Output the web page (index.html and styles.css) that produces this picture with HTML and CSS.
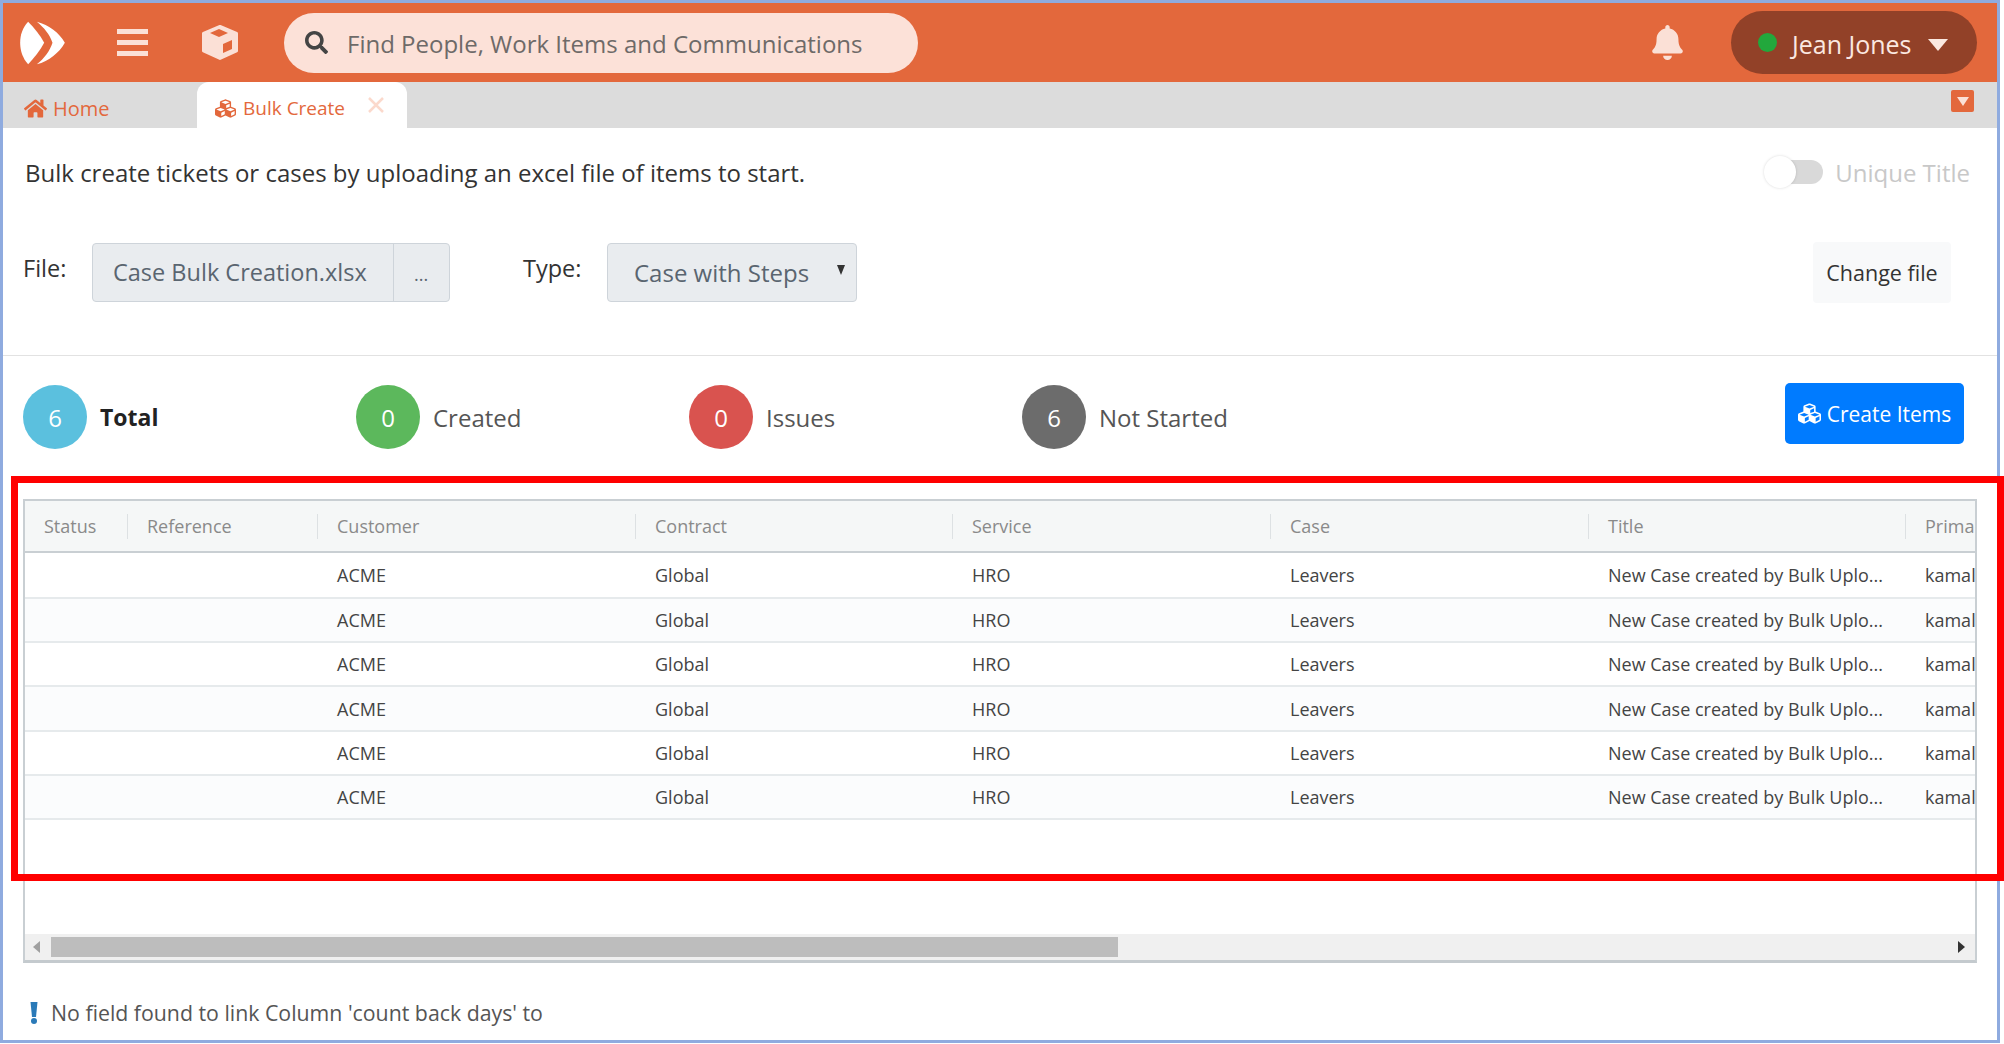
FILE: index.html

```html
<!DOCTYPE html>
<html lang="en">
 <head>
  <meta charset="UTF-8">
  <title>Bulk Create</title>
  <link rel="stylesheet" href="styles.css">
 </head>
 <body>
 <div class="frame">
	<header class="topbar">
		<svg class="logo" viewBox="55 60 140 132">
			<path d="M82 62 C65 80 58 102 58 125 C58 150 66 172 82 190 C100 170 118 148 130 125 C118 102 100 80 82 62Z" fill="#fff"/>
			<path d="M108 62 C145 72 175 95 192 125 C175 155 145 180 108 190 C130 172 147 150 155 125 C147 100 130 80 108 62Z" fill="#fff"/>
		</svg>
		<div class="burger"><span></span><span></span><span></span></div>
		<svg class="box-icon" viewBox="0 0 36 36">
			<path d="M18 1.5 L34.5 8.5 V26 L18 33.5 L1.5 26 V8.5Z" fill="#fbe0d6" stroke="#fbe0d6" stroke-width="3" stroke-linejoin="round"/>
			<path d="M17 4 L26 8 L17 12 L8 8Z" fill="#e3683c"/>
			<path d="M21 19 L30 15 V24 L21 28Z" fill="#e3683c"/>
		</svg>
		<div class="search">
			<svg class="search-icon" viewBox="0 0 512 512"><path d="M505 442.7L405.3 343c-4.5-4.5-10.6-7-17-7H372c27.6-35.3 44-79.7 44-128C416 93.1 322.9 0 208 0S0 93.1 0 208s93.1 208 208 208c48.3 0 92.7-16.4 128-44v16.3c0 6.4 2.5 12.5 7 17l99.7 99.7c9.4 9.4 24.6 9.4 33.9 0l28.3-28.3c9.4-9.4 9.4-24.6.1-34zM208 336c-70.7 0-128-57.2-128-128 0-70.7 57.2-128 128-128 70.7 0 128 57.2 128 128 0 70.7-57.2 128-128 128z"/></svg>
			<span>Find People, Work Items and Communications</span>
		</div>
		<svg class="bell" viewBox="0 0 448 512"><path d="M224 512c35.32 0 63.97-28.65 63.97-64H160.03c0 35.35 28.65 64 63.97 64zm215.39-149.71c-19.32-20.76-55.47-51.99-55.47-154.29 0-77.7-54.48-139.9-127.94-155.16V32c0-17.67-14.32-32-31.98-32s-31.98 14.33-31.98 32v20.84C118.56 68.1 64.08 130.3 64.08 208c0 102.3-36.15 133.53-55.47 154.29-6 6.45-8.66 14.16-8.61 21.71.11 16.4 12.98 32 32.1 32h383.8c19.12 0 32-15.6 32.1-32 .05-7.55-2.61-15.27-8.61-21.71z"/></svg>
		<div class="user">
			<i class="dot"></i>
			<span>Jean Jones</span>
			<i class="caret"></i>
		</div>
	</header>

	<nav class="tabs">
		<div class="tab home">
			<svg class="tab-icon" viewBox="0 0 576 512"><path d="M280.37 148.26L96 300.11V464a16 16 0 0 0 16 16l112.06-.29a16 16 0 0 0 15.92-16V368a16 16 0 0 1 16-16h64a16 16 0 0 1 16 16v95.64a16 16 0 0 0 16 16.05L464 480a16 16 0 0 0 16-16V300L295.67 148.26a12.19 12.19 0 0 0-15.3 0zM571.6 251.47L488 182.56V44.05a12 12 0 0 0-12-12h-56a12 12 0 0 0-12 12v72.61L318.47 43a48 48 0 0 0-61 0L4.34 251.47a12 12 0 0 0-1.6 16.9l25.5 31A12 12 0 0 0 45.15 301l235.22-193.74a12.19 12.19 0 0 1 15.3 0L530.9 301a12 12 0 0 0 16.9-1.6l25.5-31a12 12 0 0 0-1.7-16.93z"/></svg>
			<span>Home</span>
		</div>
		<div class="tab active">
			<svg class="tab-icon" viewBox="0 0 512 512"><path d="M488.6 250.2L392 214V105.5c0-15-9.3-28.4-23.4-33.7l-100-37.5c-8.1-3.1-17.1-3.1-25.3 0l-100 37.5c-14.1 5.3-23.4 18.7-23.4 33.7V214l-96.6 36.2C9.3 255.5 0 268.9 0 283.9V394c0 13.6 7.7 26.1 19.9 32.2l100 50c10.1 5.1 22.1 5.1 32.2 0l103.9-52 103.9 52c10.1 5.1 22.1 5.1 32.2 0l100-50c12.2-6.1 19.9-18.6 19.9-32.2V283.9c0-15-9.3-28.4-23.4-33.7zM358 214.8l-85 31.9v-68.2l85-37v73.3zM154 104.1l102-38.2 102 38.2v.6l-102 41.4-102-41.4v-.6zm84 291.1l-85 42.5v-79.1l85-38.8v75.4zm0-112l-102 41.4-102-41.4v-.6l102-38.2 102 38.2v.6zm240 112l-85 42.5v-79.1l85-38.8v75.4zm0-112l-102 41.4-102-41.4v-.6l102-38.2 102 38.2v.6z"/></svg>
			<span>Bulk Create</span>
			<svg class="tab-close" viewBox="0 0 16 16"><path d="M1 1L15 15M15 1L1 15"/></svg>
		</div>
		<div class="tab-menu"><i></i></div>
	</nav>

	<div class="intro">
		<span>Bulk create tickets or cases by uploading an excel file of items to start.</span>
		<div class="unique">
			<div class="toggle"><i></i></div>
			<span>Unique Title</span>
		</div>
	</div>

	<div class="file-row">
		<label class="field-label">File:</label>
		<div class="file-input">
			<span class="file-name">Case Bulk Creation.xlsx</span>
			<span class="file-more">...</span>
		</div>
		<label class="field-label type-label">Type:</label>
		<div class="select">
			<span>Case with Steps</span>
			<i></i>
		</div>
		<button class="change-btn">Change file</button>
	</div>

	<div class="stats">
		<div class="stat"><span class="circle blue">6</span><strong>Total</strong></div>
		<div class="stat"><span class="circle green">0</span><span>Created</span></div>
		<div class="stat"><span class="circle red">0</span><span>Issues</span></div>
		<div class="stat"><span class="circle grey">6</span><span>Not Started</span></div>
		<button class="create-btn">
			<svg viewBox="0 0 512 512"><path d="M488.6 250.2L392 214V105.5c0-15-9.3-28.4-23.4-33.7l-100-37.5c-8.1-3.1-17.1-3.1-25.3 0l-100 37.5c-14.1 5.3-23.4 18.7-23.4 33.7V214l-96.6 36.2C9.3 255.5 0 268.9 0 283.9V394c0 13.6 7.7 26.1 19.9 32.2l100 50c10.1 5.1 22.1 5.1 32.2 0l103.9-52 103.9 52c10.1 5.1 22.1 5.1 32.2 0l100-50c12.2-6.1 19.9-18.6 19.9-32.2V283.9c0-15-9.3-28.4-23.4-33.7zM358 214.8l-85 31.9v-68.2l85-37v73.3zM154 104.1l102-38.2 102 38.2v.6l-102 41.4-102-41.4v-.6zm84 291.1l-85 42.5v-79.1l85-38.8v75.4zm0-112l-102 41.4-102-41.4v-.6l102-38.2 102 38.2v.6zm240 112l-85 42.5v-79.1l85-38.8v75.4zm0-112l-102 41.4-102-41.4v-.6l102-38.2 102 38.2v.6z"/></svg>
			Create Items
		</button>
	</div>

	<div class="grid">
		<div class="grid-body">
			<table>
				<thead>
					<tr>
						<th class="c-status"><span>Status</span></th>
						<th class="c-ref"><span>Reference</span></th>
						<th class="c-wide"><span>Customer</span></th>
						<th class="c-narrow"><span>Contract</span></th>
						<th class="c-wide"><span>Service</span></th>
						<th class="c-wide"><span>Case</span></th>
						<th class="c-narrow"><span>Title</span></th>
						<th class="c-wide"><span>Primary Contact</span></th>
					</tr>
				</thead>
				<tbody>
					<tr><td></td><td></td><td>ACME</td><td>Global</td><td>HRO</td><td>Leavers</td><td>New Case created by Bulk Uplo...</td><td>kamal</td></tr>
					<tr><td></td><td></td><td>ACME</td><td>Global</td><td>HRO</td><td>Leavers</td><td>New Case created by Bulk Uplo...</td><td>kamal</td></tr>
					<tr><td></td><td></td><td>ACME</td><td>Global</td><td>HRO</td><td>Leavers</td><td>New Case created by Bulk Uplo...</td><td>kamal</td></tr>
					<tr><td></td><td></td><td>ACME</td><td>Global</td><td>HRO</td><td>Leavers</td><td>New Case created by Bulk Uplo...</td><td>kamal</td></tr>
					<tr><td></td><td></td><td>ACME</td><td>Global</td><td>HRO</td><td>Leavers</td><td>New Case created by Bulk Uplo...</td><td>kamal</td></tr>
					<tr><td></td><td></td><td>ACME</td><td>Global</td><td>HRO</td><td>Leavers</td><td>New Case created by Bulk Uplo...</td><td>kamal</td></tr>
				</tbody>
			</table>
		</div>
		<div class="scrollbar">
			<i class="arrow-left"></i>
			<div class="thumb"></div>
			<i class="arrow-right"></i>
		</div>
	</div>

	<div class="warning">
		<svg viewBox="0 0 8 22"><path d="M0.5 0H7.5L6 15H2Z"/><circle cx="4" cy="19" r="3"/></svg>
		<span>No field found to link Column 'count back days' to</span>
	</div>
 </div>
 <div class="highlight"></div>
 </body>
</html>
```

FILE: styles.css

```css
body{
	margin:0;
	padding:0;
	background:#FFFFFF;
	font-family:"Open Sans","Noto Sans",sans-serif;
	color:#333333;
}
i{
	display:block;
}
.frame{
	box-sizing:border-box;
	width:2000px;
	height:1043px;
	border:3px solid #8FABDF;
	overflow:hidden;
}

/* top bar */
.topbar{
	display:flex;
	align-items:center;
	height:79px;
	background:#E3683C;
	padding-left:16px;
}
.logo{
	width:47px;
	height:44px;
	margin-right:51px;
}
.burger{
	display:flex;
	flex-direction:column;
	gap:6px;
	width:31px;
	margin-right:54px;
}
.burger span{
	display:block;
	height:5px;
	background:#FBE0D6;
}
.box-icon{
	width:36px;
	height:36px;
	margin-right:46px;
}
.search{
	display:flex;
	align-items:center;
	box-sizing:border-box;
	width:634px;
	height:60px;
	background:#FCE1D8;
	border-radius:30px;
	padding-left:21px;
	color:#6E6A68;
	font-size:24px;
}
.search span{
	padding-top:2px;
}
.search-icon{
	width:23px;
	height:23px;
	margin-right:19px;
	fill:#444444;
}
.bell{
	width:31px;
	height:35px;
	margin-left:auto;
	margin-right:48px;
	fill:#FBE0D6;
}
.user{
	display:flex;
	align-items:center;
	box-sizing:border-box;
	width:246px;
	height:63px;
	margin-right:20px;
	background:#924128;
	border-radius:32px;
	padding-left:27px;
	color:#FBE8E0;
	font-size:25px;
}
.user span{
	padding-top:2px;
}
.dot{
	width:19px;
	height:19px;
	border-radius:50%;
	background:#22A83C;
	margin-right:15px;
}
.caret{
	width:0;
	height:0;
	border-left:10px solid transparent;
	border-right:10px solid transparent;
	border-top:12px solid #FBE8E0;
	margin-left:16px;
	margin-top:4px;
}

/* tabs */
.tabs{
	display:flex;
	align-items:stretch;
	height:46px;
	background:#DCDCDC;
	font-size:20px;
	color:#E3683C;
}
.tab{
	display:flex;
	align-items:center;
	padding-top:6px;
}
.tab-icon{
	width:23px;
	height:21px;
	fill:#E3683C;
	margin-right:6px;
}
.home{
	width:194px;
	padding-left:21px;
	box-sizing:border-box;
	border-bottom-right-radius:10px;
}
.active{
	width:210px;
	box-sizing:border-box;
	padding-left:17px;
	background:#FFFFFF;
	border-radius:12px 12px 0 0;
	font-size:19px;
}
.tab-close{
	width:16px;
	height:16px;
	margin-left:23px;
	margin-bottom:6px;
	fill:none;
	stroke:#FBD9CC;
	stroke-width:2.5;
}
.tab-menu{
	display:flex;
	align-items:center;
	justify-content:center;
	width:23px;
	height:22px;
	margin:8px 23px 0 auto;
	background:#E3683C;
	border-radius:2px;
}
.tab-menu i{
	width:0;
	height:0;
	border-left:6px solid transparent;
	border-right:6px solid transparent;
	border-top:9px solid #FBE0D6;
}

/* intro */
.intro{
	display:flex;
	align-items:center;
	justify-content:space-between;
	height:48px;
	margin-top:20px;
	padding:0 27px 0 22px;
	font-size:24px;
}
.unique{
	display:flex;
	align-items:center;
	color:#C8C8C8;
	font-size:24px;
}
.toggle{
	position:relative;
	width:44px;
	height:24px;
	margin-left:15px;
	margin-right:12px;
	background:#D9D9D9;
	border-radius:12px;
}
.toggle i{
	position:absolute;
	left:-15px;
	top:-4px;
	width:32px;
	height:32px;
	border-radius:50%;
	background:#FFFFFF;
	box-shadow:0 0 3px rgba(0,0,0,0.15);
}

/* file row */
.file-row{
	display:flex;
	align-items:center;
	height:61px;
	margin-top:46px;
	padding:0 46px 0 20px;
	font-size:23.5px;
}
.field-label{
	width:69px;
	padding-bottom:10px;
}
.file-input{
	display:flex;
	box-sizing:border-box;
	width:358px;
	height:59px;
	background:#E9ECEF;
	border:1px solid #CED4DA;
	border-radius:4px;
	color:#5A6570;
}
.file-name{
	width:301px;
	box-sizing:border-box;
	padding-left:20px;
	line-height:57px;
	border-right:1px solid #CED4DA;
}
.file-more{
	padding-left:20px;
	line-height:60px;
	font-size:18px;
}
.type-label{
	width:84px;
	margin-left:73px;
}
.select{
	display:flex;
	align-items:center;
	justify-content:space-between;
	box-sizing:border-box;
	width:250px;
	height:59px;
	padding:0 11px 0 26px;
	background:#E9ECEF;
	border:1px solid #CED4DA;
	border-radius:4px;
	color:#5A6570;
	font-size:24px;
}
.select i{
	width:0;
	height:0;
	border-left:4px solid transparent;
	border-right:4px solid transparent;
	border-top:10px solid #333333;
	margin-bottom:6px;
}
.change-btn{
	width:138px;
	height:61px;
	margin-left:auto;
	background:#F8F9FA;
	border:0;
	border-radius:4px;
	font-family:inherit;
	font-size:21.5px;
	color:#333333;
}

/* stats */
.stats{
	display:flex;
	align-items:flex-start;
	margin-top:52px;
	padding:27px 33px 0 20px;
	height:144px;
	box-sizing:border-box;
	border-top:1px solid #E2E2E2;
	font-size:24px;
	color:#555555;
}
.stat{
	display:flex;
	align-items:center;
	width:333px;
	height:64px;
	margin-top:2px;
}
.stat strong{
	color:#222222;
	font-size:23px;
}
.circle{
	display:flex;
	align-items:center;
	justify-content:center;
	width:64px;
	height:64px;
	margin-right:13px;
	border-radius:50%;
	color:#FFFFFF;
}
.blue{
	background:#5BC0DE;
}
.green{
	background:#5CB85C;
}
.red{
	background:#D9534F;
}
.grey{
	background:#6C6C6C;
}
.create-btn{
	display:flex;
	align-items:center;
	justify-content:center;
	gap:6px;
	width:179px;
	height:61px;
	margin-left:auto;
	background:#007BFF;
	border:0;
	border-radius:5px;
	color:#FFFFFF;
	font-family:inherit;
	font-size:21px;
}
.create-btn svg{
	width:23px;
	height:23px;
	fill:#FFFFFF;
}

/* grid */
.grid{
	display:flex;
	flex-direction:column;
	box-sizing:border-box;
	height:464px;
	margin:0 20px;
	border:2px solid #C9CFD3;
	border-bottom:3px solid #C4CACE;
}
.grid-body{
	flex:1;
	overflow:hidden;
}
table{
	table-layout:fixed;
	width:2197px;
	border-collapse:collapse;
	font-size:18px;
}
th{
	height:50px;
	padding:0;
	background:#F5F7F7;
	border-bottom:2px solid #C9CFD3;
	font-weight:normal;
	text-align:left;
	color:#8A8A8A;
}
th span{
	display:block;
	height:25px;
	line-height:25px;
	padding-left:19px;
	border-left:1px solid #DDE1E3;
	white-space:nowrap;
}
th:first-child span{
	border-left:0;
}
.c-status{
	width:102px;
}
.c-ref{
	width:190px;
}
.c-wide{
	width:318px;
}
.c-narrow{
	width:317px;
}
td{
	height:42px;
	padding:0 0 0 20px;
	border-bottom:2px solid #E6EAEC;
	white-space:nowrap;
	overflow:hidden;
	color:#444444;
}
tbody tr:first-child td{
	height:44px;
}
tbody tr:nth-child(4) td{
	height:43px;
}
tbody tr:nth-child(even) td{
	background:#FBFCFD;
}
.scrollbar{
	display:flex;
	align-items:center;
	height:26px;
	background:#F0F0F0;
}
.thumb{
	width:1067px;
	height:20px;
	margin-left:11px;
	background:#BDBDBD;
}
.arrow-left{
	width:0;
	height:0;
	margin-left:8px;
	border-top:6px solid transparent;
	border-bottom:6px solid transparent;
	border-right:7px solid #A0A0A0;
}
.arrow-right{
	width:0;
	height:0;
	margin-left:auto;
	margin-right:10px;
	border-top:6px solid transparent;
	border-bottom:6px solid transparent;
	border-left:7px solid #333333;
}

/* warning */
.warning{
	display:flex;
	align-items:center;
	margin-top:35px;
	padding-left:27px;
	font-size:21.3px;
	color:#555555;
}
.warning svg{
	width:8px;
	height:22px;
	margin-right:13px;
	fill:#2A7AB8;
}

/* red marker round the table */
.highlight{
	position:absolute;
	left:11px;
	top:476px;
	width:1979px;
	height:391px;
	border:7px solid #FF0000;
}
```
